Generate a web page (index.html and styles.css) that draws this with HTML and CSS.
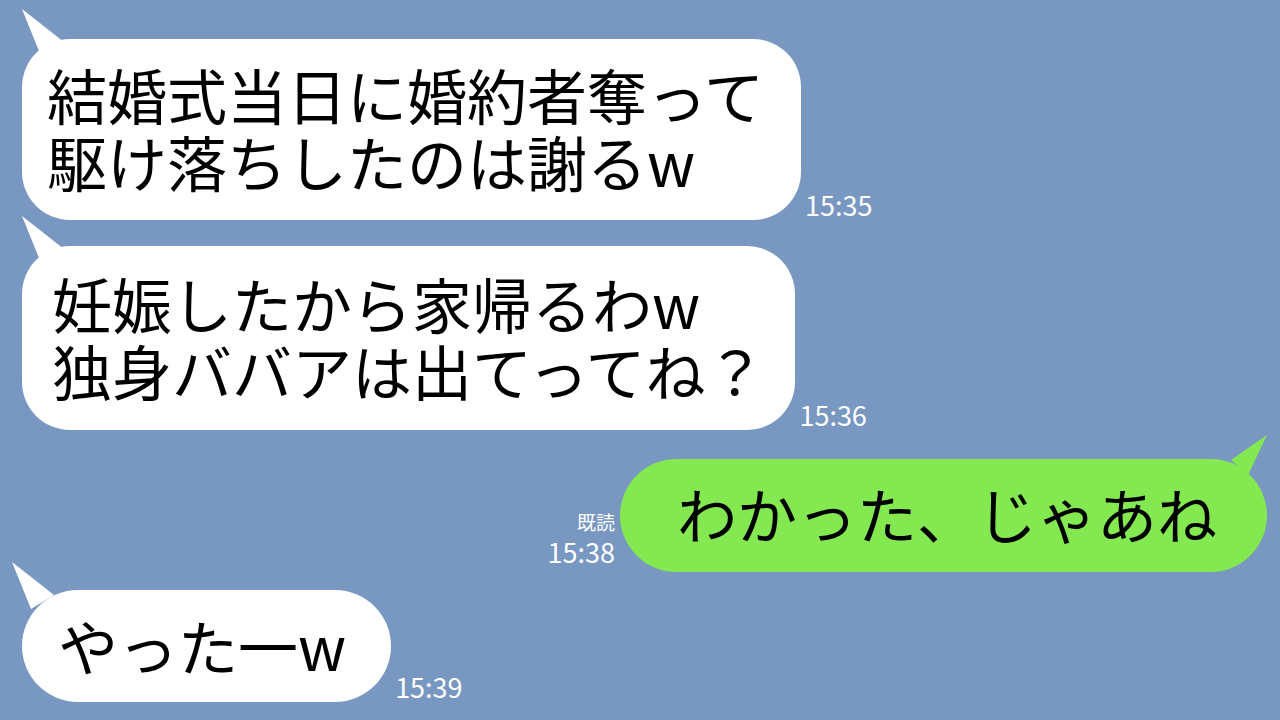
FILE: index.html
```html
<!DOCTYPE html>
<html lang="ja">
<head>
    <meta charset="UTF-8">
    <meta name="viewport" content="width=device-width, initial-scale=1.0">
    <title>トーク</title>
    <link rel="stylesheet" href="styles.css">
</head>
<body>
    <div class="talk">
        <div class="row row-left first">
            <div class="bubble bubble-white b1">結婚式当日に婚約者奪って<br>駆け落ちしたのは謝るw</div>
            <div class="meta"><span class="time">15:35</span></div>
        </div>
        <div class="row row-left second">
            <div class="bubble bubble-white b2">妊娠したから家帰るわw<br>独身ババアは出てってね？</div>
            <div class="meta"><span class="time">15:36</span></div>
        </div>
        <div class="row row-right third">
            <div class="meta meta-right">
                <span class="read">既読</span>
                <span class="time">15:38</span>
            </div>
            <div class="bubble bubble-green">わかった、じゃあね</div>
        </div>
        <div class="row row-left fourth">
            <div class="bubble bubble-white short">やった一w</div>
            <div class="meta"><span class="time">15:39</span></div>
        </div>
    </div>
</body>
</html>
```

FILE: styles.css
```css
html, body {
    margin: 0;
    height: 100%;
}
body {
    background-color: #7897c1;
    font-family: "Noto Sans CJK JP", "Noto Sans", sans-serif;
    overflow: hidden;
}
.talk {
    display: flex;
    flex-direction: column;
    padding: 39px 13px 0 22px;
}
.row {
    display: flex;
    align-items: flex-end;
}
.row-right {
    justify-content: flex-end;
}
.second { margin-top: 26px; }
.third { margin-top: 29px; }
.fourth { margin-top: 18px; }

.bubble {
    position: relative;
    font-size: 60px;
    line-height: 67px;
    color: #000;
    border-radius: 48px;
    white-space: nowrap;
}
.bubble-white {
    background: #fff;
}
.b1 {
    padding: 21px 37px 26px 25px;
}
.b2 {
    padding: 23px 30px 27px 30px;
}
.bubble-green {
    background: #84e950;
    line-height: 68px;
    padding: 20px 50px 25px 57px;
    border-radius: 57px;
}
.short {
    padding: 21px 45px 24px 36px;
    border-radius: 56px;
}
/* speech tails */
.bubble-white::before {
    content: "";
    position: absolute;
    left: 0;
    top: -30px;
    width: 44px;
    height: 50px;
    background: #fff;
    clip-path: polygon(0 0, 42px 33px, 19px 47px);
}
.short::before {
    left: -10px;
    top: -28px;
}
.bubble-green::after {
    content: "";
    position: absolute;
    right: 0;
    top: -24px;
    width: 40px;
    height: 42px;
    background: #84e950;
    clip-path: polygon(100% 0, 4px 25px, 21px 40px);
}

.meta {
    display: flex;
    flex-direction: column;
    color: #fff;
    padding: 0 0 0 4px;
}
.meta-right {
    align-items: flex-end;
    padding: 0 5px 5px 0;
}
.time {
    font-size: 27px;
    line-height: 30px;
}
.read {
    font-size: 19px;
    line-height: 20px;
    margin-bottom: 5px;
}
```
